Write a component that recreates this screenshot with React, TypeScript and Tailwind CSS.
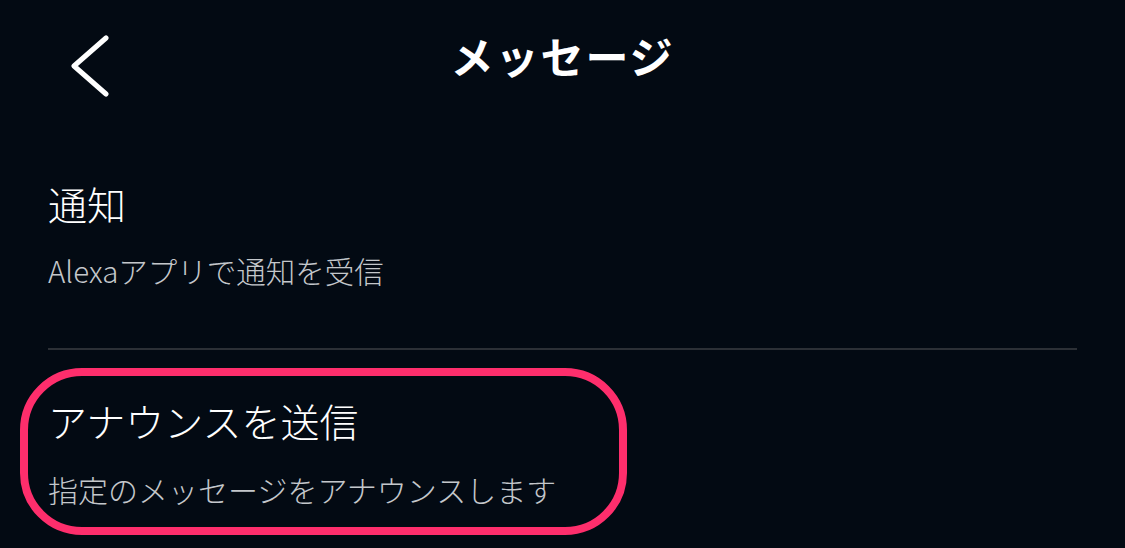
import React from "react";

const items = [
  { title: "通知", desc: "Alexaアプリで通知を受信" },
  { title: "アナウンスを送信", desc: "指定のメッセージをアナウンスします" },
];

const App: React.FC = () => {
  return (
    <div
      className="relative w-[1125px] h-[548px] overflow-hidden bg-[#030a13] text-white"
      style={{ fontFamily: '"Noto Sans CJK JP", "Noto Sans", sans-serif' }}
    >
      {/* Header */}
      <div className="grid grid-cols-[1fr_auto_1fr] h-[120px]">
        <div className="pl-[70px] pt-[35px]">
          <svg width="42" height="64" viewBox="0 0 42 64" fill="none">
            <path
              d="M36 3 L4 31 L36 59"
              stroke="white"
              strokeWidth="5"
              strokeLinecap="round"
              strokeLinejoin="round"
            />
          </svg>
        </div>
        <h1 className="pt-[31px] text-[43px] leading-[48px] font-bold tracking-[2px]">メッセージ</h1>
        <div />
      </div>

      {/* Settings list */}
      <div className="px-[48px] pt-[59px] font-light">
        <div className="pb-[58px]">
          <div className="text-[39px] leading-[48px]">{items[0].title}</div>
          <div className="mt-[23px] text-[29.5px] leading-[40px] text-[#c4c7cb]">{items[0].desc}</div>
        </div>
        <div className="h-[2px] bg-[#2c3036]" />
        <div className="pt-[46px]">
          <div className="text-[39px] leading-[48px]">{items[1].title}</div>
          <div className="mt-[25px] text-[30px] leading-[40px] text-[#c4c7cb]">{items[1].desc}</div>
        </div>
      </div>

      {/* Highlight annotation */}
      <div className="absolute left-[20px] top-[368px] w-[607px] h-[167px] rounded-[62px] border-[8px] border-[#fe2e6c]" />
    </div>
  );
};

export default App;
